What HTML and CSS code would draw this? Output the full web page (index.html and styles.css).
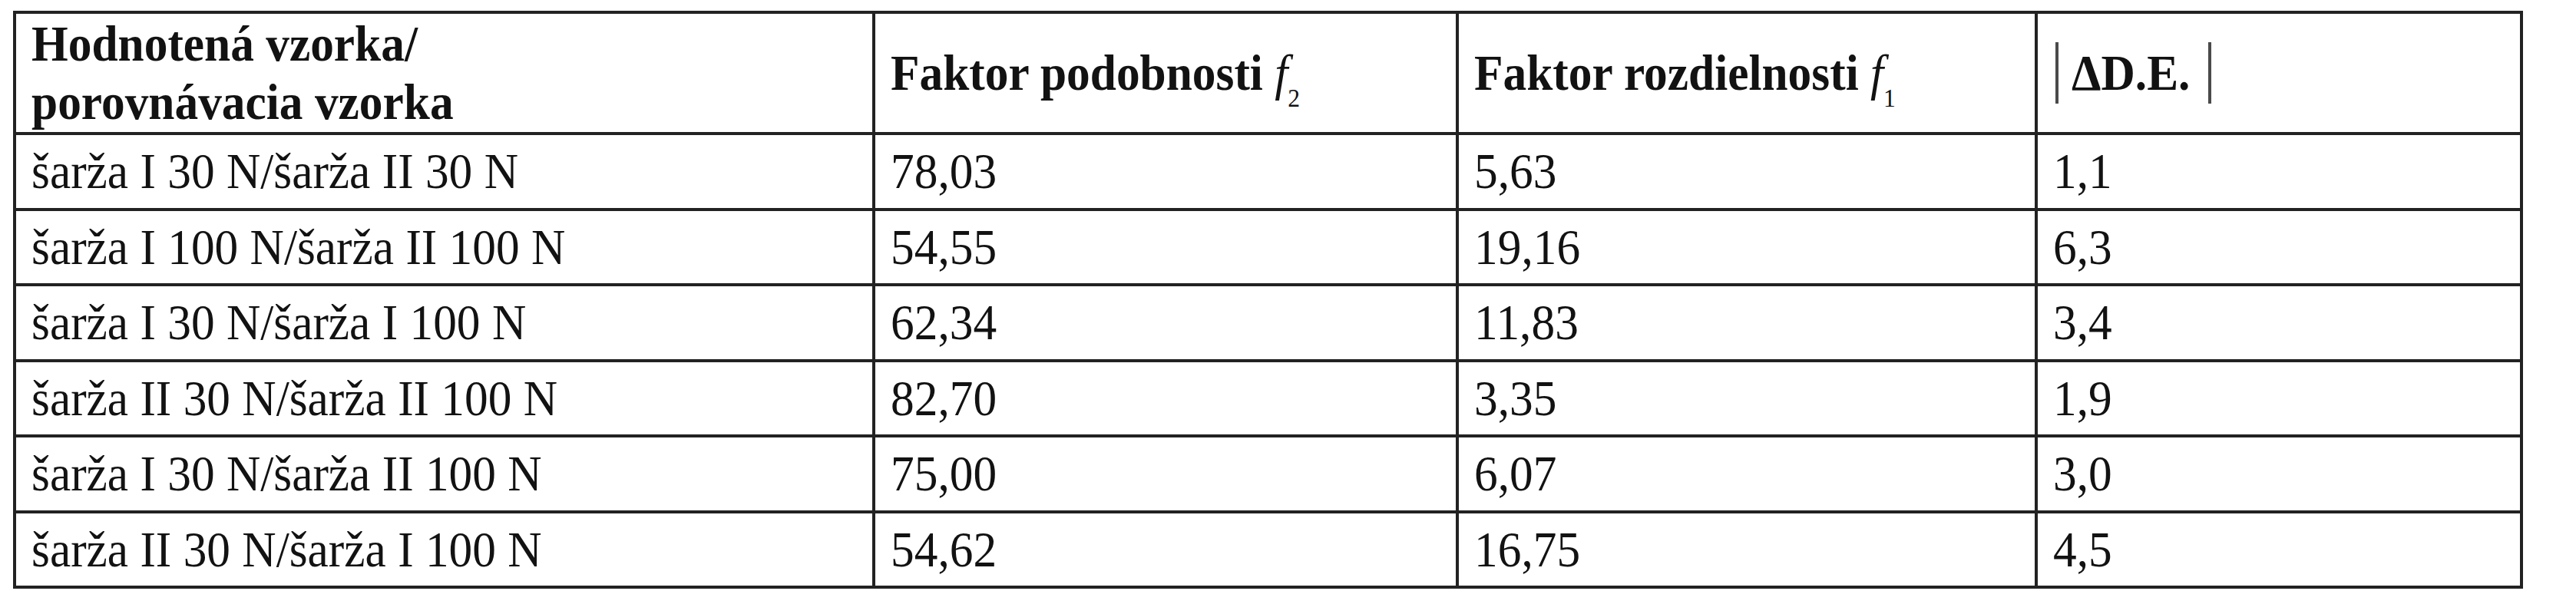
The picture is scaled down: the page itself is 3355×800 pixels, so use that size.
FILE: index.html
```html
<!DOCTYPE html>
<html lang="sk">
<head>
<meta charset="utf-8">
<title>Tabuľka</title>
<link rel="stylesheet" href="styles.css">
</head>
<body>
<div class="grid">
  <div class="cell head"><span class="t">Hodnotená vzorka/<br>porovnávacia vzorka</span></div>
  <div class="cell head"><span class="t">Faktor podobnosti <i class="fx">f</i><sub class="sub">2</sub></span></div>
  <div class="cell head"><span class="t">Faktor rozdielnosti <i class="fx">f</i><sub class="sub">1</sub></span></div>
  <div class="cell head"><span class="bar bar-l"></span><span class="t">ΔD.E.</span><span class="bar bar-r"></span></div>

  <div class="cell"><span class="t">šarža I 30 N/šarža II 30 N</span></div>
  <div class="cell"><span class="t">78,03</span></div>
  <div class="cell"><span class="t">5,63</span></div>
  <div class="cell"><span class="t">1,1</span></div>

  <div class="cell"><span class="t">šarža I 100 N/šarža II 100 N</span></div>
  <div class="cell"><span class="t">54,55</span></div>
  <div class="cell"><span class="t">19,16</span></div>
  <div class="cell"><span class="t">6,3</span></div>

  <div class="cell"><span class="t">šarža I 30 N/šarža I 100 N</span></div>
  <div class="cell"><span class="t">62,34</span></div>
  <div class="cell"><span class="t">11,83</span></div>
  <div class="cell"><span class="t">3,4</span></div>

  <div class="cell"><span class="t">šarža II 30 N/šarža II 100 N</span></div>
  <div class="cell"><span class="t">82,70</span></div>
  <div class="cell"><span class="t">3,35</span></div>
  <div class="cell"><span class="t">1,9</span></div>

  <div class="cell"><span class="t">šarža I 30 N/šarža II 100 N</span></div>
  <div class="cell"><span class="t">75,00</span></div>
  <div class="cell"><span class="t">6,07</span></div>
  <div class="cell"><span class="t">3,0</span></div>

  <div class="cell"><span class="t">šarža II 30 N/šarža I 100 N</span></div>
  <div class="cell"><span class="t">54,62</span></div>
  <div class="cell"><span class="t">16,75</span></div>
  <div class="cell"><span class="t">4,5</span></div>
</div>
</body>
</html>
```

FILE: styles.css
```css
html, body {
  margin: 0;
  padding: 0;
  background: #ffffff;
}

body {
  font-family: "Liberation Serif", "Times New Roman", serif;
  color: #121212;
}

.grid {
  display: grid;
  grid-template-columns: 1119px 760px 754px 632px;
  grid-template-rows: 158px repeat(6, 98.5px);
  width: max-content;
  margin: 14px 0 0 17px;
  border-top: 4px solid #222222;
  border-left: 4px solid #222222;
}

.cell {
  box-sizing: border-box;
  border-right: 4px solid #222222;
  border-bottom: 4px solid #222222;
  padding-left: 20px;
  display: flex;
  align-items: center;
  font-size: 66px;
  line-height: 76px;
  white-space: nowrap;
  overflow: hidden;
}

.head {
  font-weight: bold;
}

.t {
  display: inline-block;
  transform: scaleX(0.93);
  transform-origin: 0 50%;
}

.fx {
  font-style: italic;
  font-weight: normal;
}

.sub {
  font-size: 34px;
  font-weight: normal;
  line-height: 0;
  vertical-align: -22px;
}

.bar {
  display: inline-block;
  width: 4px;
  height: 80px;
  background: #4a4a4a;
}

.bar-l {
  margin-left: 3px;
  margin-right: 17px;
}

.bar-r {
  margin-left: 12px;
}
```
